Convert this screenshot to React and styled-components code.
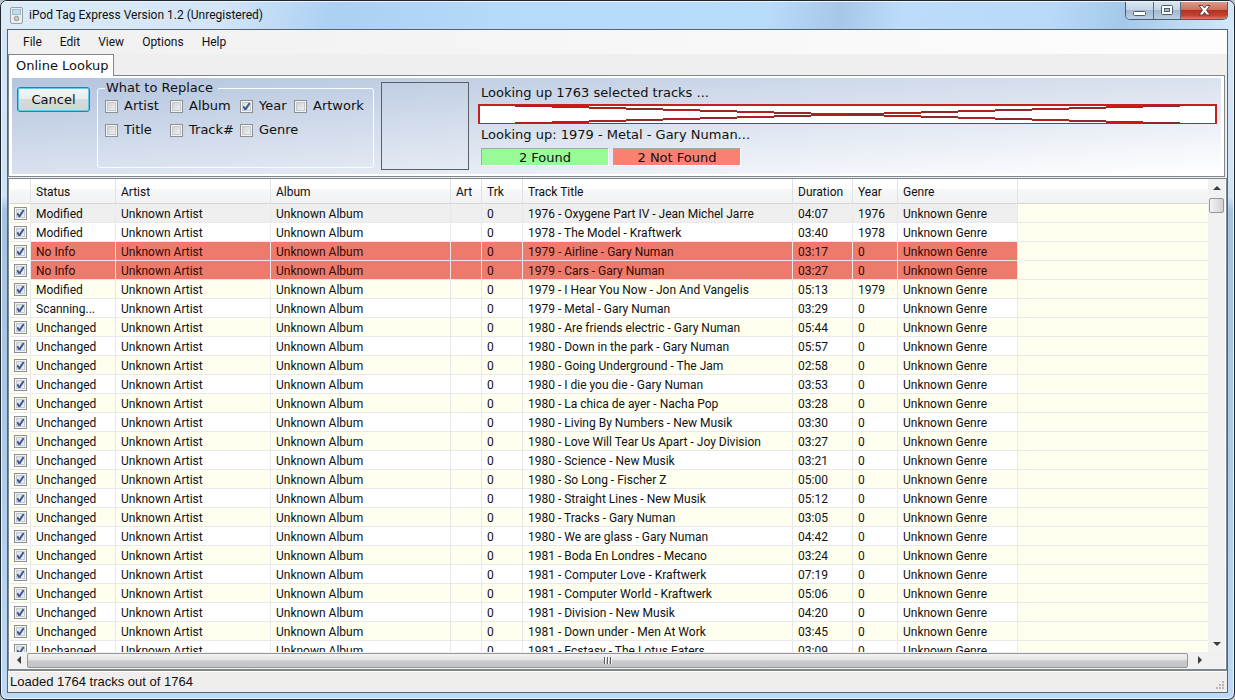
import { useState } from "react";
import styled, { createGlobalStyle } from "styled-components";

const FONTS = {
  ui: 'Roboto, "Noto Sans", sans-serif',
  wide: '"DejaVu Sans", sans-serif',
  status: '"Liberation Sans", Arial, sans-serif',
};

const COLORS = {
  line: "#e9e9e9",
  cream: "#fffff0",
  noInfo: "#ee7a6c",
  edge: "#7f868c",
};

const checkMark = `url("data:image/svg+xml,%3Csvg xmlns='http://www.w3.org/2000/svg' viewBox='0 0 13 13'%3E%3Cpath d='M3.2 6.2 L5.4 9.6 L9.8 2.8' fill='none' stroke='%233d5896' stroke-width='2'/%3E%3C/svg%3E")`;

const GlobalStyle = createGlobalStyle`
  * {
    box-sizing: border-box;
  }

  body {
    margin: 0;
    background: #b9c4c6;
    color: #101010;
    font-family: ${FONTS.ui};
    font-size: 12px;
  }
`;

const Window = styled.div`
  height: 100vh;
  display: flex;
  flex-direction: column;
  padding: 0 6px 6px;
  border: 1px solid #20262e;
  border-radius: 7px;
  overflow: hidden;
  background: linear-gradient(to bottom, #d3e6f8, #cfe3f6 28%, #a3c3e0 30%, #a9c9e8 60%, #bcdaf5);
  box-shadow: inset 0 0 0 1px #eaf5fe;
`;

const TitleBar = styled.header`
  flex: none;
  height: 28px;
  margin: 0 -6px;
  padding: 0 0 0 9px;
  display: flex;
  align-items: flex-start;
  border-top: 1px solid #eaf5fe;
  background: linear-gradient(
    100deg,
    #dcebf7,
    #d3e5f6 18%,
    #abd0f4 27%,
    #b8dafa 42%,
    #badcfb 62%,
    #a6c7e8 68%,
    #bcdcfa 73%,
    #b8d9f8 85%,
    #a5c8ea 91%,
    #d3e8fb
  );
`;

const WindowTitle = styled.h1`
  flex: 1;
  margin: 0;
  padding-left: 6px;
  font-size: 12px;
  font-weight: 400;
  line-height: 26px;
`;

const AppIcon = styled.svg`
  width: 13px;
  height: 17px;
  margin-top: 5px;
`;

const WindowButtons = styled.div`
  display: flex;
  height: 18px;
  margin-right: 6px;
  border: 1px solid #4d5d70;
  border-top: 0;
  border-radius: 0 0 5px 5px;
  overflow: hidden;
`;

const WindowButton = styled.button`
  width: ${p => p.close ? "47px" : "27px"};
  padding: 0;
  display: flex;
  align-items: center;
  justify-content: center;
  border: 0;
  border-left: ${p => p.first ? "0" : "1px solid #5a6b7d"};
  background: ${p => p.close
    ? "linear-gradient(to bottom, #dd9a8c, #cf6c58 48%, #b23222 50%, #c4442f 80%, #dc8066)"
    : "linear-gradient(to bottom, #d9e6f2, #c2d4e6 48%, #a2b9d0 50%, #b9d0e6)"};
`;

const Client = styled.main`
  flex: 1;
  min-height: 0;
  display: flex;
  flex-direction: column;
  border: 1px solid #566472;
  background: #f0eeed;
`;

const MenuBar = styled.nav`
  flex: none;
  height: 24px;
  display: flex;
  padding-left: 6px;
  background: linear-gradient(to right, #f0f0f0, #fdfdfd);
`;

const MenuItem = styled.button`
  padding: 0 9px;
  border: 0;
  background: none;
  color: inherit;
  font: inherit;
  line-height: 24px;
`;

const Tabs = styled.div`
  flex: none;
  height: 21px;
  display: flex;
  background: #efefef;
`;

const Tab = styled.button`
  position: relative;
  z-index: 1;
  height: 22px;
  padding: 0 4px 0 7px;
  border: 1px solid ${COLORS.edge};
  border-bottom: 0;
  background: #fff;
  color: inherit;
  font-family: ${FONTS.wide};
  font-size: 13px;
  line-height: 19px;
`;

const TabPanel = styled.section`
  flex: none;
  margin-right: 2px;
  padding: 2px 3px;
  border: 1px solid ${COLORS.edge};
  background: #fff;
  font-family: ${FONTS.wide};
  font-size: 13px;
`;

const Lookup = styled.div`
  height: 96px;
  display: flex;
  align-items: flex-start;
  padding: 4px 4px 4px 5px;
  background: linear-gradient(to bottom right, #b3c4de, #fff);
`;

const CancelButton = styled.button`
  width: 73px;
  height: 25px;
  margin: 5px 7px 0 0;
  padding: 0;
  border: 1px solid #347f9f;
  border-radius: 3px;
  background: linear-gradient(to bottom, #f3f6f6, #e8ecec 48%, #d5dada 50%, #ced6d8);
  box-shadow: inset 0 0 0 1px #5cc9ee;
  color: inherit;
  font: inherit;
`;

const ReplaceGroup = styled.fieldset`
  width: 277px;
  height: 86px;
  margin: 0 7px 0 0;
  padding: 4px 7px 0;
  border: 1px solid #fafcff;
  border-radius: 3px;
`;

const ReplaceLegend = styled.legend`
  padding: 0 5px 0 1px;
  line-height: 12px;
`;

const ReplaceGrid = styled.div`
  display: grid;
  grid-template-columns: 65px 70px 54px auto;
  row-gap: 8px;
`;

const CheckLabel = styled.label`
  display: flex;
  align-items: center;
  gap: 6px;
  line-height: 16px;
`;

const Check = styled.input.attrs({ type: "checkbox" })`
  appearance: none;
  flex: none;
  display: block;
  width: 13px;
  height: 13px;
  margin: 0;
  border: 1px solid #8e8f8f;
  background: linear-gradient(135deg, #c7ccd2, #f6f6f6);
  box-shadow: inset 0 0 0 1px #f4f4f4, inset 0 0 0 2px #c4c9ce;

  &:checked {
    background: ${checkMark} center / 13px 13px, linear-gradient(135deg, #d3dae4, #f6f6f6);
  }
`;

const Artwork = styled.div`
  width: 88px;
  height: 88px;
  margin-right: 9px;
  border: 1px solid #5c6066;
`;

const Progress = styled.div`
  flex: 1;
  min-width: 0;
  display: grid;
  grid-template-rows: 22px 20px 24px 18px;
`;

const ProgressText = styled.div`
  padding-left: 3px;
  line-height: 22px;
`;

const ProgressBar = styled.svg`
  display: block;
  width: 100%;
  height: 20px;
`;

const Counts = styled.div`
  display: flex;
  gap: 4px;
  padding-left: 3px;
`;

const Count = styled.div`
  width: 128px;
  height: 18px;
  border: 1px solid;
  border-color: #a3a9a8 #fff #fff #a3a9a8;
  background: ${p => p.missing ? "#fa8072" : "#98fb98"};
  line-height: 17px;
  text-align: center;
`;

const List = styled.section`
  flex: 1;
  min-height: 0;
  margin-top: 1px;
  display: grid;
  grid-template-columns: minmax(0, 1fr) 17px;
  grid-template-rows: minmax(0, 1fr) 17px;
  padding: 0 1px;
  border: 1px solid ${COLORS.edge};
  border-bottom-width: 2px;
  background: #fff;
`;

const TableArea = styled.div`
  overflow: hidden;
  background: ${COLORS.cream};
`;

const Table = styled.table`
  width: 100%;
  table-layout: fixed;
  border-spacing: 0;
  color: #101010;
`;

const Col = styled.col`
  width: ${p => p.size ? `${p.size}px` : "auto"};
`;

const HeadCell = styled.th`
  height: 25px;
  padding: 2px 5px 0;
  border-right: 1px solid #e0e2e4;
  border-bottom: 1px solid #d5d5d5;
  background: linear-gradient(to bottom, #fff 42%, #f6f7f8 44%, #f1f2f4);
  font-weight: 400;
  line-height: 22px;
  text-align: left;
  white-space: nowrap;

  &:last-child {
    border-right: 0;
  }
`;

const Cell = styled.td`
  height: 19px;
  padding: 2px 5px 0;
  border-right: 1px solid ${COLORS.line};
  border-bottom: 1px solid ${COLORS.line};
  line-height: 16px;
  white-space: nowrap;
`;

const CheckCell = styled(Cell)`
  padding: 0 4px;
`;

const EmptyCell = styled(Cell)`
  border-right: 0;
  background: ${COLORS.cream};
`;

const Row = styled.tr`
  background: ${p => p.odd ? COLORS.cream : "#fff"};

  ${Cell}:not(${CheckCell}):not(${EmptyCell}) {
    ${p => p.selected && "background: #efefef;"}
    ${p => p.status === "No Info" && `background: ${COLORS.noInfo}; color: #340906;`}
  }
`;

const ScrollColumn = styled.div`
  display: flex;
  flex-direction: column;
  align-items: center;
  background: #f1f1f1;
`;

const ScrollRow = styled.div`
  display: flex;
  align-items: center;
  padding-bottom: 1px;
  background: #f1f1f1;
`;

const ScrollCorner = styled.div`
  background: #f0f0f0;
`;

const ScrollArrow = styled.button`
  flex: none;
  width: 17px;
  height: 17px;
  padding: 0;
  display: flex;
  align-items: center;
  justify-content: center;
  border: 0;
  background: none;
`;

const VerticalThumb = styled.div`
  width: 15px;
  height: 15px;
  margin-top: 2px;
  margin-bottom: auto;
  border: 1px solid #979797;
  border-radius: 2px;
  background: linear-gradient(to right, #f4f4f4, #e3e3e5 48%, #cfd0d2);
`;

const HorizontalThumb = styled.div`
  flex: 1;
  height: 15px;
  margin-right: 3px;
  display: flex;
  align-items: center;
  justify-content: center;
  border: 1px solid #979797;
  border-radius: 2px;
  background: linear-gradient(to bottom, #f3f3f3, #e3e3e5 48%, #c7c8cb 52%, #c4c5c8);
`;

const StatusBar = styled.footer`
  flex: none;
  height: 21px;
  display: flex;
  align-items: flex-end;
  justify-content: space-between;
  padding: 0 2px;
  border-top: 1px solid #fff;
  font-family: ${FONTS.status};
  font-size: 13px;
  line-height: 20px;
`;

const columns = [
  { title: "", size: 21 },
  { title: "Status", size: 85 },
  { title: "Artist", size: 155 },
  { title: "Album", size: 180 },
  { title: "Art", size: 31 },
  { title: "Trk", size: 41 },
  { title: "Track Title", size: 270 },
  { title: "Duration", size: 60 },
  { title: "Year", size: 45 },
  { title: "Genre", size: 120 },
  { title: "" },
];

const tracks = [
  ["Modified", "1976 - Oxygene Part IV - Jean Michel Jarre", "04:07", "1976"],
  ["Modified", "1978 - The Model - Kraftwerk", "03:40", "1978"],
  ["No Info", "1979 - Airline - Gary Numan", "03:17", "0"],
  ["No Info", "1979 - Cars - Gary Numan", "03:27", "0"],
  ["Modified", "1979 - I Hear You Now - Jon And Vangelis", "05:13", "1979"],
  ["Scanning...", "1979 - Metal - Gary Numan", "03:29", "0"],
  ["Unchanged", "1980 - Are friends electric - Gary Numan", "05:44", "0"],
  ["Unchanged", "1980 - Down in the park - Gary Numan", "05:57", "0"],
  ["Unchanged", "1980 - Going Underground - The Jam", "02:58", "0"],
  ["Unchanged", "1980 - I die you die - Gary Numan", "03:53", "0"],
  ["Unchanged", "1980 - La chica de ayer - Nacha Pop", "03:28", "0"],
  ["Unchanged", "1980 - Living By Numbers - New Musik", "03:30", "0"],
  ["Unchanged", "1980 - Love Will Tear Us Apart - Joy Division", "03:27", "0"],
  ["Unchanged", "1980 - Science - New Musik", "03:21", "0"],
  ["Unchanged", "1980 - So Long - Fischer Z", "05:00", "0"],
  ["Unchanged", "1980 - Straight Lines - New Musik", "05:12", "0"],
  ["Unchanged", "1980 - Tracks - Gary Numan", "03:05", "0"],
  ["Unchanged", "1980 - We are glass - Gary Numan", "04:42", "0"],
  ["Unchanged", "1981 - Boda En Londres - Mecano", "03:24", "0"],
  ["Unchanged", "1981 - Computer Love - Kraftwerk", "07:19", "0"],
  ["Unchanged", "1981 - Computer World - Kraftwerk", "05:06", "0"],
  ["Unchanged", "1981 - Division - New Musik", "04:20", "0"],
  ["Unchanged", "1981 - Down under - Men At Work", "03:45", "0"],
  ["Unchanged", "1981 - Ecstasy - The Lotus Eaters", "03:09", "0"],
];

const fields = ["Artist", "Album", "Year", "Artwork", "Title", "Track#", "Genre"];

const arrowPaths = {
  up: "M0 6 L4 2 L8 6 Z",
  down: "M0 2 L4 6 L8 2 Z",
  left: "M6 0 L2 4 L6 8 Z",
  right: "M2 0 L6 4 L2 8 Z",
};

const Arrow = ({ direction }) => (
  <ScrollArrow aria-label={`Scroll ${direction}`}>
    <svg width="8" height="8" viewBox="0 0 8 8">
      <path d={arrowPaths[direction]} fill="#3c3c3c" />
    </svg>
  </ScrollArrow>
);

// the bar has no value yet, so it is drawn as an empty box crossed by two stepped lines
const CrossedBar = () => {
  const steps = Array.from({ length: 18 }, (_, i) => i + 1);

  return (
    <ProgressBar viewBox="0 0 740 20" preserveAspectRatio="none" role="progressbar" aria-label="Lookup progress" shapeRendering="crispEdges">
      <rect x="0" y="0" width="740" height="20" fill="#c4201f" />
      <rect x="2" y="2" width="736" height="17" fill="#fff" />
      {steps.map(i => (
        <g key={i} fill={i === 2 || i === 17 ? "#d01414" : i % 2 ? "#b02020" : "#8c2a2e"}>
          <rect x={i * 37} y={i} width="37" height="2" />
          <rect x={i * 37} y={19 - i} width="37" height="2" />
        </g>
      ))}
    </ProgressBar>
  );
};

const Title = () => (
  <TitleBar>
    <AppIcon viewBox="0 0 13 17">
      <rect x="0.5" y="0.5" width="12" height="16" rx="1.5" fill="#eceff0" stroke="#98a0a6" />
      <rect x="2.5" y="2.5" width="8" height="5" fill="#bcdcf2" stroke="#a5b7c4" />
      <circle cx="6.5" cy="11.5" r="2.8" fill="#a4aaae" />
      <circle cx="6.5" cy="11.5" r="1.1" fill="#e4e7e8" />
    </AppIcon>
    <WindowTitle>iPod Tag Express Version 1.2 (Unregistered)</WindowTitle>
    <WindowButtons>
      <WindowButton first aria-label="Minimize">
        <svg width="13" height="11" viewBox="0 0 13 11">
          <rect x="0.5" y="6.5" width="12" height="4" rx="1" fill="#fff" stroke="#525c68" />
        </svg>
      </WindowButton>
      <WindowButton aria-label="Maximize">
        <svg width="13" height="11" viewBox="0 0 13 11">
          <rect x="0.5" y="0.5" width="11" height="9" rx="1" fill="#fff" stroke="#525c68" />
          <rect x="3.5" y="3.5" width="5" height="3" fill="#a9bdd1" stroke="#525c68" />
        </svg>
      </WindowButton>
      <WindowButton close aria-label="Close">
        <svg width="13" height="11" viewBox="0 0 13 11">
          <path
            d="M1 0.5 H4.4 L6.5 3 L8.6 0.5 H12 L8.5 5.2 L12 10 H8.6 L6.5 7.4 L4.4 10 H1 L4.5 5.2 Z"
            fill="#fff"
            stroke="#5b4548"
          />
        </svg>
      </WindowButton>
    </WindowButtons>
  </TitleBar>
);

const LookupPanel = () => {
  const [replace, setReplace] = useState({ Year: true });

  return (
    <TabPanel>
      <Lookup>
        <CancelButton>Cancel</CancelButton>

        <ReplaceGroup>
          <ReplaceLegend>What to Replace</ReplaceLegend>
          <ReplaceGrid>
            {fields.map(field => (
              <CheckLabel key={field}>
                <Check
                  checked={!!replace[field]}
                  onChange={e => setReplace({ ...replace, [field]: e.target.checked })}
                />
                {field}
              </CheckLabel>
            ))}
          </ReplaceGrid>
        </ReplaceGroup>

        <Artwork />

        <Progress>
          <ProgressText>Looking up 1763 selected tracks ...</ProgressText>
          <CrossedBar />
          <ProgressText>Looking up: 1979 - Metal - Gary Numan...</ProgressText>
          <Counts>
            <Count>2 Found</Count>
            <Count missing>2 Not Found</Count>
          </Counts>
        </Progress>
      </Lookup>
    </TabPanel>
  );
};

const TrackTable = () => (
  <TableArea>
    <Table>
      <colgroup>
        {columns.map((column, i) => <Col key={i} size={column.size} />)}
      </colgroup>
      <thead>
        <tr>
          {columns.map((column, i) => <HeadCell key={i}>{column.title}</HeadCell>)}
        </tr>
      </thead>
      <tbody>
        {tracks.map(([status, title, duration, year], i) => (
          <Row key={title} odd={i % 2 === 0} selected={i === 0} status={status}>
            <CheckCell>
              <Check defaultChecked aria-label={title} />
            </CheckCell>
            <Cell>{status}</Cell>
            <Cell>Unknown Artist</Cell>
            <Cell>Unknown Album</Cell>
            <Cell />
            <Cell>0</Cell>
            <Cell>{title}</Cell>
            <Cell>{duration}</Cell>
            <Cell>{year}</Cell>
            <Cell>Unknown Genre</Cell>
            <EmptyCell />
          </Row>
        ))}
      </tbody>
    </Table>
  </TableArea>
);

const App = () => {
  return (
    <Window>
      <GlobalStyle />
      <Title />

      <Client>
        <MenuBar>
          {["File", "Edit", "View", "Options", "Help"].map(item => (
            <MenuItem key={item}>{item}</MenuItem>
          ))}
        </MenuBar>

        <Tabs>
          <Tab>Online Lookup</Tab>
        </Tabs>

        <LookupPanel />

        <List>
          <TrackTable />
          <ScrollColumn>
            <Arrow direction="up" />
            <VerticalThumb />
            <Arrow direction="down" />
          </ScrollColumn>
          <ScrollRow>
            <Arrow direction="left" />
            <HorizontalThumb>
              <svg width="8" height="7" viewBox="0 0 8 7" shapeRendering="crispEdges">
                <path d="M0.5 0 V7 M3.5 0 V7 M6.5 0 V7" stroke="#5a5a5a" />
                <path d="M1.5 0 V7 M4.5 0 V7 M7.5 0 V7" stroke="#f4f4f4" />
              </svg>
            </HorizontalThumb>
            <Arrow direction="right" />
          </ScrollRow>
          <ScrollCorner />
        </List>

        <StatusBar>
          Loaded 1764 tracks out of 1764
          <svg width="10" height="11" viewBox="0 0 10 11">
            <path
              d="M7 0h2v2h-2z M7 3h2v2h-2z M4 3h2v2h-2z M7 6h2v2h-2z M4 6h2v2h-2z M1 6h2v2h-2z"
              fill="#b9b5b3"
            />
          </svg>
        </StatusBar>
      </Client>
    </Window>
  );
};

export default App;
